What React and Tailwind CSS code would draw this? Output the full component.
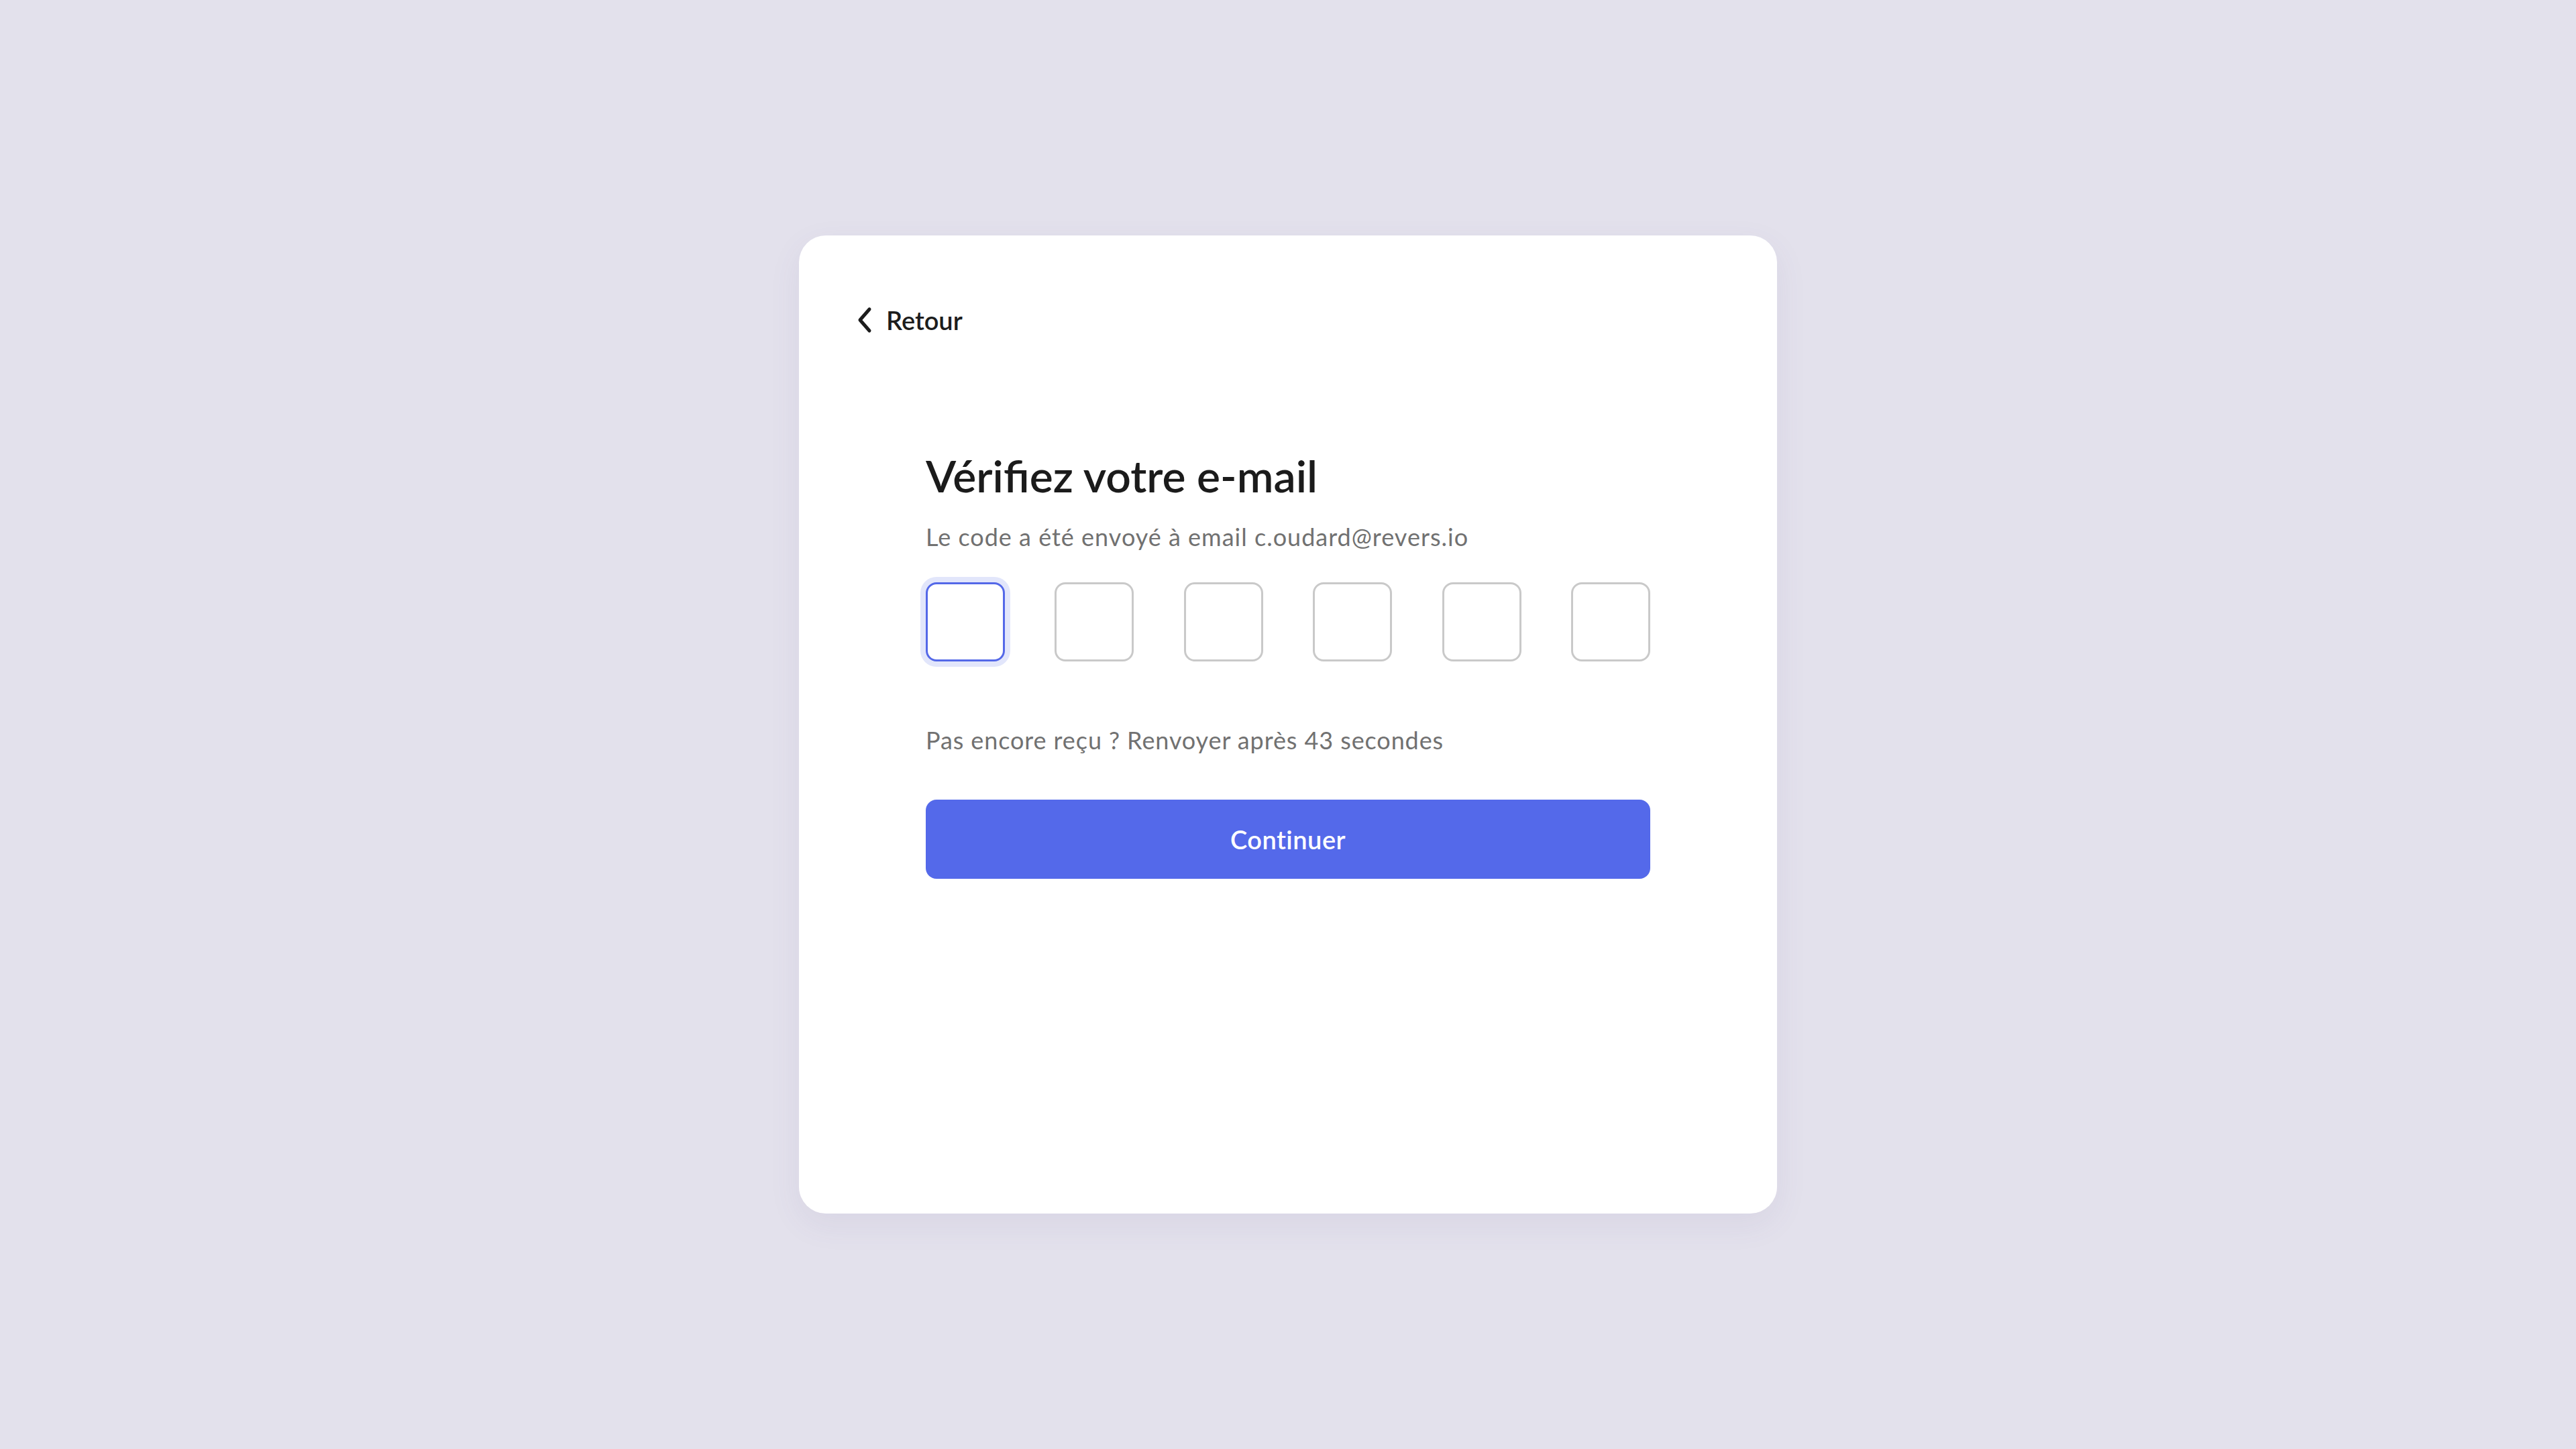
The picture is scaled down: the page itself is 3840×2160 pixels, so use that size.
import { useState } from "react";

function BackIcon() {
    return (
        <svg width="24" height="40" viewBox="0 0 24 40" fill="none">
            <path d="M19 4 L5 20 L19 36" stroke="#1c1c1c" strokeWidth="5" strokeLinecap="round" strokeLinejoin="round" />
        </svg>
    )
}

function CodeInputs() {
    const [values, setValues] = useState(["", "", "", "", "", ""])

    return (
        <div className="flex justify-between">
            {values.map((v, i) => (
                <input
                    key={i}
                    value={v}
                    maxLength={1}
                    autoFocus={i === 0}
                    onChange={(e) => {
                        const next = [...values]
                        next[i] = e.target.value
                        setValues(next)
                    }}
                    className={
                        i === 0
                            ? "w-[118px] h-[118px] rounded-[16px] border-[3px] border-[#5468e8] ring-[8px] ring-[#e2e6fb] outline-none text-center text-[48px] bg-white"
                            : "w-[118px] h-[118px] rounded-[16px] border-[3px] border-[#c9c9c9] outline-none text-center text-[48px] bg-white"
                    }
                />
            ))}
        </div>
    )
}

export default function App() {
    return (
        <div className="min-h-screen w-full bg-[#e3e1ec] flex items-center justify-center font-['Lato',sans-serif]">
            <div className="w-[1458px] h-[1458px] bg-white rounded-[40px] shadow-[0_16px_48px_rgba(90,80,140,0.08)] flex flex-col">
                <div className="pt-[102px] pl-[86px]">
                    <button className="flex items-center gap-[20px] h-[48px] text-[#1c1c1c]">
                        <BackIcon />
                        <span className="text-[38px] leading-[48px] font-semibold">Retour</span>
                    </button>
                </div>

                <div className="px-[189px] mt-[168px] flex flex-col">
                    <h1 className="text-[66px] leading-[80px] font-semibold text-[#1b1b1b]">Vérifiez votre e-mail</h1>
                    <p className="mt-[29px] text-[36px] leading-[44px] tracking-[1px] text-[#717171]">
                        Le code a été envoyé à email c.oudard@revers.io
                    </p>

                    <div className="mt-[46px]">
                        <CodeInputs />
                    </div>

                    <p className="mt-[95px] text-[36px] leading-[44px] tracking-[0.9px] text-[#717171]">
                        Pas encore reçu ? Renvoyer après 43 secondes
                    </p>

                    <button className="mt-[67px] h-[118px] w-full rounded-[16px] bg-[#5469ea] text-white text-[38px] tracking-[0.5px] font-semibold">
                        Continuer
                    </button>
                </div>
            </div>
        </div>
    )
}
